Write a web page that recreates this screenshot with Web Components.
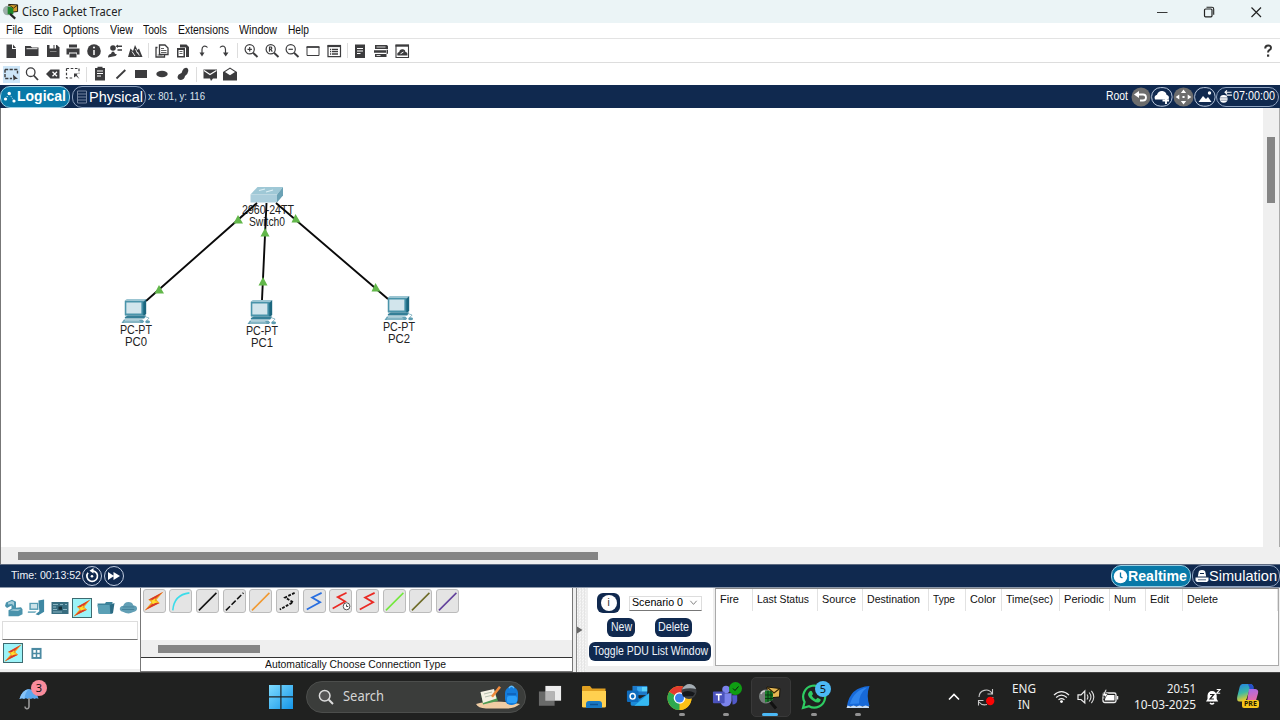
<!DOCTYPE html>
<html lang="en">
<head>
<meta charset="utf-8">
<title>Cisco Packet Tracer</title>
<style>
html,body{margin:0;padding:0;width:1280px;height:720px;overflow:hidden;background:#fff;font-family:"Liberation Sans",Arial,sans-serif}
</style>
</head>
<body>
<pt-desktop></pt-desktop>
<script>
const G='#3c3c3e';
const bolt='<path d="M15.500 0.500 3.500 7 6 9 0.500 15.500 12.500 9.500 10 7Z" fill="#f4a51c"/><path d="M15.500 0.500 3.500 7 8 7Z M0.500 15.500 12.500 9.500 7.500 9.500Z" fill="#d8382a"/><path d="M6 8 9 5.500 8.500 8 11 8.500 7 10.500Z" fill="#ffe030"/>';
const zig=(c,d='')=>`<path d="M14 1.500 6 5.200 12.700 9 1.500 14.800" fill="none" stroke="${c}" stroke-width="1.500" ${d}/>`;
const line=(c,d='')=>`<path d="M.8 15.500 15.500 1.500" fill="none" stroke="${c}" stroke-width="1.300" ${d}/>`;
/* Icons: [viewBox width, viewBox height, markup] */
const ICONS={
file:[16,16,`<path d="M3.500 1.500h5.500v4.500h4v9h-9.500z M10 1.500 13 5h-3z" fill="${G}"/>`],
folder:[16,16,`<path d="M1 3h5.500l1.500 1.500h6.500v8.500h-13.500z" fill="${G}"/><path d="M2.500 5.700h11" stroke="#fff" stroke-width=".9"/>`],
save:[16,16,`<path d="M2 2h10l2.500 2.500v9.500h-12.500z" fill="${G}"/><path d="M4.500 2h4v3.500h-4z M9.500 2h1.500v3.500h-1.500z" fill="#fff"/><path d="M5 8.500h6.500" stroke="#888"/>`],
print:[16,16,`<path d="M4 1.500h8v3h-8z M1.500 5.500h13v6h-2.500v-2h-8v2h-2.500z M4.500 10.500h7v4h-7z" fill="${G}"/>`],
info:[16,16,`<circle cx="8" cy="8" r="6.800" fill="${G}"/><path d="M8 7v5" stroke="#fff" stroke-width="1.500"/><circle cx="8" cy="4.600" r="1" fill="#fff"/>`],
user:[16,16,`<circle cx="6" cy="5" r="2.800" fill="${G}"/><path d="M1 14.500q0-3 3-3.800l1-2h2l1 2 2 .8-1.500 1.500z" fill="${G}"/><path d="M9.500 3.300h5.500M10.500 7h4.500" stroke="${G}" stroke-width="1.400"/><path d="M11 1.500 8.800 3.300 11 5z" fill="${G}"/>`],
wizard:[16,16,`<path d="M1 14 3.500 5.500 6 8 8 2 10.500 7 12 5.500 15.500 14z" fill="${G}"/><path d="M5 8.500 8 13M8.500 6l2 4.500M10.500 9l1.800 3.500" stroke="#fff" stroke-width=".9"/>`],
copy:[16,16,`<path d="M5.500 2h5.500l3 3v6.500h-8.500z M3.500 4.500h-1.500v9.500h8.500v-2" fill="none" stroke="${G}" stroke-width="1.300"/><path d="M7 5.500h3m-3 2h5.500m-5.500 2h5.500m-9 2.500h5" stroke="${G}" stroke-width=".8"/>`],
paste:[16,16,`<path d="M5 1.500h6.500l2.500 2.500v10h-3v-9.500h-6z M2 5h8v9.500h-8z" fill="${G}"/><path d="M3.500 7h5v6h-5z" fill="#fff"/><path d="M4.500 8.500h3m-3 2h3" stroke="${G}" stroke-width=".8"/>`],
undo:[16,16,`<path d="M11.500 4.500q-1.500-2-3.800-1.300Q6 4 6 6.500v4" fill="none" stroke="${G}" stroke-width="1.200"/><path d="M3.500 9.500h5l-2.500 4z" fill="${G}"/>`],
redo:[16,16,`<path d="M4 4.500q1.500-2 3.800-1.300Q9.500 4 9.500 6.500v4" fill="none" stroke="${G}" stroke-width="1.200"/><path d="M7 9.500h5.500l-2.800 4z" fill="${G}"/>`],
zin:[16,16,`<circle cx="6.700" cy="6.300" r="4.600" fill="none" stroke="${G}" stroke-width="1.200"/><path d="M10 9.700 14.500 14" stroke="${G}" stroke-width="1.900"/><path d="M4.500 6.300h4.400M6.700 4.100v4.400" stroke="${G}" stroke-width="1.200"/>`],
zr:[16,16,`<circle cx="6.700" cy="6.300" r="4.600" fill="none" stroke="${G}" stroke-width="1.200"/><path d="M10 9.700 14.500 14" stroke="${G}" stroke-width="1.900"/><path d="M5.500 8.800v-4.800h1.600q1.300 1.200 0 2.400h-1.600m1.300 0 1.500 2.300" fill="none" stroke="${G}" stroke-width="1.200"/>`],
zout:[16,16,`<circle cx="6.700" cy="6.300" r="4.600" fill="none" stroke="${G}" stroke-width="1.200"/><path d="M10 9.700 14.500 14" stroke="${G}" stroke-width="1.900"/><path d="M4.500 6.300h4.400" stroke="${G}" stroke-width="1.200"/>`],
rect:[16,16,`<path d="M2 4h12v8.500h-12z" fill="none" stroke="${G}" stroke-width="1"/><path d="M1.500 4h13" stroke="${G}" stroke-width="1.600"/>`],
list:[16,16,`<path d="M2 2.800h12.500v10.800h-12.500z" fill="none" stroke="${G}" stroke-width="1.200"/><path d="M1.500 3h13.500" stroke="${G}" stroke-width="2.200"/><path d="M4 6.500h1.200m.8 0h6M4 8.700h1.200m.8 0h6M4 11h1.200m.8 0h6" stroke="${G}" stroke-width="1.300"/>`],
doc:[16,16,`<path d="M3 1.500h10v13.500h-10z" fill="${G}"/><path d="M5 5.500h6M5 8h6M5 10.500h3.500" stroke="#fff" stroke-width="1.100"/>`],
cards:[16,16,`<path d="M2 2h12l1 1.200v2.800h-13z M1 7.200h12v2.500h-12z M2 11h11.500v3h-11.500z M13.500 6.800h1.500v4h-1.500z" fill="${G}"/><path d="M3.500 4h9M3.500 12.500h4" stroke="#fff" stroke-width=".8"/>`],
cloudwin:[16,16,`<path d="M2 2h12.500v12.500h-12.500z" fill="none" stroke="${G}" stroke-width="1.100"/><path d="M1.500 2.700h13.500" stroke="${G}" stroke-width="2"/><path d="M3.500 12.500q-1-3 1.700-3.500 .5-3 3.500-2.700 2.500 0 2.700 2.700 2.500.3 2 3.500z" fill="${G}"/><path d="M6.500 10.800 9.500 9" stroke="#fff"/>`],
help:[16,16,`<path d="M5.200 5.500q0-3 3-3t2.700 2.500q0 1.400-1.600 2.200-1.300.8-1.200 2.300" fill="none" stroke="#333" stroke-width="2"/><path d="M7 11.500h2.200v2.200h-2.200z" fill="#333"/>`],
select:[18,16,`<path d="M3 3.500h12.500v4M3 3.500v9h7" fill="none" stroke="${G}" stroke-width="1.400" stroke-dasharray="3.200 1.400"/><path d="M11 8.500l5 4.500h-2.500l-2 1.500z" fill="${G}"/>`],
mag:[16,16,`<circle cx="6.700" cy="6.200" r="4.300" fill="none" stroke="${G}" stroke-width="1.300"/><path d="M9.800 9.500 14 14" stroke="${G}" stroke-width="1.800"/>`],
del:[16,16,`<path d="M1 8 5.500 3.500h9v9h-9z" fill="${G}"/><path d="M7.500 5.800 12 10.300m0-4.500-4.500 4.500" stroke="#fff" stroke-width="1.300"/>`],
resize:[16,16,`<path d="M1.500 2.500h12.500v5M1.500 2.500v9.500h6.500" fill="none" stroke="${G}" stroke-width="1.200" stroke-dasharray="2.600 1.600"/><path d="M9 7.500h4l-1.300 1.300 2.800 4.200-3.500-3-2 1.500z" fill="${G}"/>`],
note:[16,16,`<path d="M3 2h10v12.500h-10z M5.500 .8h5v2h-5z" fill="${G}"/><path d="M5 5h6M5 7.500h6M5 10h4" stroke="#fff" stroke-width="1"/>`],
pen:[16,16,`<path d="M3.500 12.500 12.300 4" stroke="${G}" stroke-width="1.800"/>`],
frect:[16,16,`<path d="M2 4h12v8h-12z" fill="${G}"/>`],
fell:[16,16,`<ellipse cx="8" cy="8" rx="5.700" ry="3.300" fill="${G}"/>`],
blob:[16,16,`<path d="M7.500 4.500Q8.500 2 11 1.800 13.500 2 13.300 5 12.800 8.500 10 10 9.500 13.500 6 14 2.800 14 2.500 11 2.800 8 5.500 7.500 7 7 7.500 4.500Z" fill="${G}"/>`],
mail:[16,16,`<path d="M1.500 3.500h13.500v9h-4l-2 2.500-1-2.500h-6.500z" fill="${G}"/><path d="M2 4.500 8 8.500 14.500 4.500" fill="none" stroke="#fff" stroke-width="1.100"/>`],
mailo:[16,16,`<path d="M1 6 8 1.500 15 6v8.500h-14z" fill="${G}"/><path d="M8 2.700 13 6 8 9.200 3 6z" fill="#fff"/>`],
logical:[14,14,`<g fill="#fff"><circle cx="2.500" cy="9" r="1.600"/><circle cx="6.200" cy="3.500" r="1.700"/><circle cx="11" cy="11" r="1.600"/></g><path d="M2.500 9 6.200 3.500 11 11" fill="none" stroke="#fff" stroke-width=".9" stroke-dasharray="1 1.500"/>`],
rack:[12,14,`<path d="M1.500 1h9v12h-9zM1.500 4h9M1.500 7h9M1.500 10h9" fill="none" stroke="#7686a2" stroke-width="1"/>`],
back:[20,20,`<circle cx="10" cy="10" r="9.500" fill="#6d6d6d"/><path d="M6 7.500h6q3 0 3 3t-3 3h-3" fill="none" stroke="#fff" stroke-width="1.800"/><path d="M8 4v7l-5-3.500z" fill="#fff"/>`],
cloudp:[22,20,`<rect x=".6" y=".6" width="20.500" height="18.600" rx="9" fill="#10294f" stroke="#b9c8dd"/><path d="M4 12.500q-1.500-3.800 2-4.800 1.500-4.200 5.500-3.700 3.500.5 4 3.700 3.500 1 2 4.800z" fill="#fff"/><path d="M15 10v7m-3.500-3.500h6.500" stroke="#fff" stroke-width="1.900"/>`],
move:[20,20,`<circle cx="10" cy="10" r="9.500" fill="#6d6d6d"/><path d="M10 2.500 12.500 6h-5zM10 17.500 7.500 14h5zM2.500 10 6 7.500v5zM17.500 10 14 12.500v-5zM9 9h2v2h-2z" fill="#fff"/>`],
pic:[22,20,`<rect x=".6" y=".6" width="20.500" height="18.600" rx="9" fill="#10294f" stroke="#b9c8dd"/><path d="M4.500 15 9 9l3 3 2-2 3.500 5z" fill="#fff"/><circle cx="15.500" cy="6" r="1.700" fill="#fff"/>`],
env:[15,16,`<circle cx="5" cy="10.500" r="4.200" fill="#fff"/><path d="M1 9.500h8M1.500 12h7" stroke="#5d6d88" stroke-width=".8"/><path d="M6.500 3.500h7m-5-2-2 2 2 2M8 6.500h6" fill="none" stroke="#fff" stroke-width="1.300"/>`],
reset:[22,20,`<circle cx="11" cy="10" r="9.500" fill="none" stroke="#c0cce0"/><path d="M12 4.800a5.300 5.300 0 1 1-5 2" fill="none" stroke="#fff" stroke-width="1.700"/><path d="M8.500 4.700 12.500 2v5.500z" fill="#fff"/><circle cx="11" cy="10.300" r="1.300" fill="#fff"/>`],
fwd:[22,20,`<circle cx="11" cy="10" r="9.500" fill="none" stroke="#c0cce0"/><path d="M5 6 11 10 5 14zM10.500 6l6.500 4-6.500 4z" fill="#fff"/>`],
clock:[15,15,`<circle cx="7.500" cy="7.500" r="6.800" fill="#fff"/><path d="M7.500 3.500v4.300l2 1.200" fill="none" stroke="#0577a7" stroke-width="1.300"/>`],
sim:[14,14,`<path d="M3.500 4q0-3 3.500-3t3.500 3l.7 3.500H2.800zM.5 8.500h13v3l-1.500 1.500H2L.5 11.500z" fill="#fff"/><path d="M5 4.500h4" stroke="#10294f"/><path d="M3 10.800h8" stroke="#10294f" stroke-width=".7"/>`],
router:[20,18,`<path d="M2 3.500 8 .8l4 2v6l5-.5 1.500 2v5l-4 2h-10v-6l3-1.500v-3.300L3 9 1 7z" fill="#4a93ac"/><path d="M4 3.500l4-1.500 2 1v4l-2-2-4 .5zM6 11.500l3-1.300h8l-3 1.800z" fill="#a5cdd9"/>`],
enddev:[20,18,`<path d="M12 1.500 18 .5v13l-6 3.500-3-1 4-3z" fill="#3f88a3"/><path d="M2.500 4h9.500v7.500h-9.500z" fill="#579db4"/><path d="M4 5.300h6.500v4.700h-6.500z" fill="#cde3ea"/><path d="M1 13h9l-1.500 1.800H.8z" fill="#7db3c4"/>`],
board:[18,14,`<path d="M.5 1h17v12h-17z" fill="#386d80"/><path d="M2 3.500h5M9 3.500h3M14 3.500h2M2 6h3M2 8.500h4M12 8.500h4M2 11h9" stroke="#95bdca" stroke-width=".9"/><path d="M7.500 5.500h3.500v3.300h-3.500z" fill="#152f39"/>`],
fold:[18,16,`<path d="M.5 3.500h7.500l1-1.500h6.500v11.500h-14z" fill="#3c829a"/><path d="M.5 5h12l1 9h-11.500z" fill="#5ba0b6"/><path d="M13 5 17.500 3 16 13l-2.500 1z" fill="#2b6b83"/>`],
cloud:[20,16,`<path d="M4 12.500q-4-1-3-4.300Q2 6 4.500 6 5.500 2 10 2q4 0 5 3.500 4 .5 4 3.500 0 3-4 3.700-5 3-11-.2z" fill="#629fb5"/><path d="M4 7.300h12M3 10h13" stroke="#3c7b94" stroke-width=".8"/>`],
bolt:[16,16,bolt],
grid4:[12,14,`<path d="M.5 1h11v12h-11z" fill="#4b8aa2"/><path d="M2.500 3.300h2.700v2.900h-2.700zM6.800 3.300h2.700v2.900h-2.700zM2.500 8h2.700v2.900h-2.700zM6.800 8h2.700v2.900h-2.700z" fill="#fff"/>`],
console:[16,16,`<path d="M1.500 15.500Q2.500 3 15.500 1.500" fill="none" stroke="#3cdcea" stroke-width="1.300"/>`],
straight:[16,16,line('#111')],
cross:[16,16,line('#111','stroke-dasharray="4.800 1.700"')],
fiber:[16,16,line('#f0982f')],
phone:[16,16,zig('#111','stroke-dasharray="2.400 1.100"')],
coax:[16,16,zig('#2a6fe0')],
dce:[18,17,zig('#ea2a24')+'<circle cx="14" cy="13" r="3" fill="#fff" stroke="#444" stroke-width=".8"/><path d="M14 11.500v1.700h1.500" fill="none" stroke="#333" stroke-width=".8"/>'],
dte:[16,16,zig('#ea2a24')],
octal:[16,16,line('#72e83c')],
iot:[16,16,line('#6d6a26')],
usb:[16,16,line('#62419c')],
umbrella:[30,30,`<path d="M2.500 17Q5 8 12 7q8 1 9.500 10-2-1.500-4 0-1.500-1.700-3.500 0-1.800-1-3.300 0-1.700-1.700-4 0-2-1.500-4.200 0z" fill="#5aa7ee"/><path d="M12 7q-4 3-4.500 10-2-1.500-5 0Q5 8 12 7z" fill="#86c3f8"/><path d="M12 16v8.500q-.3 2.800-2.800 2-1.200-.5-1.200-2" fill="none" stroke="#999" stroke-width="1.600"/>`],
windows:[24,24,`<defs><linearGradient id="g" x1="0" y1="0" x2="1" y2="1"><stop offset="0" stop-color="#7fdcff"/><stop offset="1" stop-color="#1495e8"/></linearGradient></defs><path d="M0 0h11.300v11.300H0zM12.500 0H24v11.300H12.500zM0 12.500h11.300V24H0zM12.500 12.500H24V24H12.500z" fill="url(#g)"/>`],
smag:[16,16,`<circle cx="6.700" cy="6.700" r="5.300" fill="#555" stroke="#ddd" stroke-width="1.500"/><path d="M10.800 10.800 15 15" stroke="#ddd" stroke-width="2"/>`],
backpack:[46,26,`<path d="M1 20q14 -5 44 0-5 4-12 4.500H11Q3 24 1 20z" fill="#f0cda4"/><path d="M6 9 19 6l4 11-15 3.500z" fill="#4f9c54"/><path d="M5.500 8 19 5l2.500 9.500L8 19z" fill="#f5f1e4"/><path d="M9 10l8-2M10 13l8-2" stroke="#b5bfae"/><path d="M16 12 24 2l2 1.500-8 10z" fill="#f08a3c"/><rect x="30" y="3" width="13" height="18" rx="6" fill="#147cda"/><path d="M34 4q2.500-3.500 5 0" fill="none" stroke="#5bbcff" stroke-width="1.500"/><rect x="32" y="12" width="10" height="7" rx="2" fill="#2ba0fb"/><path d="M32 10h9" stroke="#0c4fa0"/>`],
taskview:[26,24,`<path d="M8 1h17v16H8z" fill="#ededed"/><path d="M1 7h17v15.500H1z" fill="#777" opacity=".85"/><path d="M8 7h10v10H8z" fill="#b5b5b5"/>`],
explorer:[26,24,`<path d="M1 2q0-1 1-1h7l2 2.500h13.500V22H1z" fill="#e0a021"/><path d="M1 6h24v15q0 1.500-1.500 1.500h-21Q1 22.500 1 21z" fill="#ffd04f"/><path d="M5 23v-4q0-3 3-3h10q3 0 3 3v4z" fill="#1879c4"/><path d="M9 19.500h8" stroke="#0c5394" stroke-width="1.500"/>`],
outlook:[26,24,`<path d="M7 1h16v10H7z" fill="#1d79c9"/><path d="M12 2h5v5h-5z" fill="#37aaf0"/><path d="M17 2h6v5h-6z" fill="#5ad1fb"/><path d="M5 9l10 6 10-6v12q0 1.500-1.500 1.500H6.500Q5 22.500 5 21z" fill="#1a8ad9"/><path d="M25 9v12q0 1.500-1.500 1.500H9z" fill="#35b8f1"/><rect x="1" y="6" width="12.500" height="12.500" rx="1.200" fill="#0f6cbd"/><ellipse cx="7.200" cy="12.200" rx="2.800" ry="3.100" fill="none" stroke="#fff" stroke-width="1.600"/>`],
chrome:[30,28,`<circle cx="12.500" cy="15" r="12" fill="#fbc116"/><path d="M12.500 15 2.100 9A12 12 0 0 1 22.900 9z" fill="#e33b2e"/><path d="M2.100 9 12.500 15 12.500 27A12 12 0 0 1 2.100 9z" fill="#2da94f"/><path d="M12.500 27 18 17 22.900 9A12 12 0 0 1 12.500 27z" fill="#fbc116"/><circle cx="12.500" cy="15" r="5.800" fill="#fff"/><circle cx="12.500" cy="15" r="4.500" fill="#3a7eea"/><circle cx="22" cy="8.500" r="7.500" fill="#3b3e41"/><path d="M14.800 6.500Q18 1 22.500 1q5 .5 6.700 5-7-1.500-14.400.5z" fill="#a4adb3"/><path d="M15 10q5-4 13 0l-2 3-10 .5z" fill="#15171a"/>`],
teams:[30,26,`<circle cx="15" cy="6" r="4" fill="#7b83eb"/><circle cx="23" cy="8" r="3" fill="#5059c9"/><path d="M9 10h12v8q-1 6-6 6t-6-5z" fill="#7b83eb"/><path d="M21.500 12H27v6q-1 4-5 4z" fill="#5059c9"/><rect x="1" y="8" width="12.500" height="12.500" rx="1" fill="#4b53bc"/><path d="M4 11.300h6.500M7.200 11v7" stroke="#fff" stroke-width="1.700"/>`],
pt:[24,26,`<path d="M9 3 22 4.500 21.500 13 9.500 14z" fill="#e5b752" stroke="#17130b"/><path d="M9.500 3.500 16 9l5.500-4.200" fill="none" stroke="#3b2a08" stroke-width="1.300"/><circle cx="8" cy="12.500" r="7" fill="#777d7c"/><path d="M7 7q5-1.500 8 2v7l-8 2.500z" fill="#187f2a"/><path d="M7 11h8M7 14.500h8M10 7v11M13 7v10" stroke="#07370f"/><path d="M12.500 18 18 24.500" stroke="#111" stroke-width="3"/><path d="M3 10q1-3 4-3" fill="none" stroke="#ccc" stroke-width="1.500"/>`],
ptsmall:[18,18,`<path d="M7 1.500 16.500 2v7L8 10z" fill="#cf9a29" stroke="#17130b"/><path d="M7.500 2 12 5.500 16 2.500" fill="none" stroke="#392a0b"/><circle cx="6" cy="8" r="5" fill="#9dafaa"/><path d="M6 4q4-.5 6 2v6H6z" fill="#1e872b"/><path d="M8.500 11.500 14 16.500" stroke="#222" stroke-width="2.300"/>`],
whatsapp:[26,26,`<path d="M2 24 3.600 18A11 11 0 1 1 8 22.300z" fill="#202020" stroke="#2ecc62" stroke-width="2.200"/><path d="M8.500 7.500q1.500-1.500 2.500 0l1 2.500-1.200 1.800q1.500 2.600 4 3.700l1.700-1.700 3 1.400q.8 1-1 2.800-2.500 1.500-6-1-5.500-3.500-5.500-7 .5-1.500 1.500-2.500z" fill="#2ecc62"/>`],
shark:[24,24,`<path d="M1 21Q4 2 23.500 1q-3.500 9 0 20z" fill="#1769d8"/><path d="M4 19Q8 5 21 2.500q-8 6-8 16z" fill="#2f85ee"/><path d="M.5 23l1-2.500 3 1 3-1 3 1 3-1 3 1 3-1 3.500 1v1.500z" fill="#c9dff8"/>`],
up:[14,10,`<path d="M2 7.500 7 2.500l5 5" fill="none" stroke="#fff" stroke-width="1.600"/>`],
sync:[20,20,`<path d="M3 10A7 7 0 0 1 16 6.500M16.500 2v5h-5M3 15q3 4 8 2.500M2.500 18.500v-5h5" fill="none" stroke="#c9c9c9" stroke-width="1.100"/><path d="M17 10q0 4-4 6.200" fill="none" stroke="#c9c9c9"/><circle cx="14.200" cy="14" r="4.200" fill="#fa0505"/>`],
wifi:[18,16,`<path d="M1 6.500Q9-1 17 6.500M3.300 9Q9 4 14.700 9M5.800 11.500Q9 9 12.200 11.500" fill="none" stroke="#eee" stroke-width="1.300"/><circle cx="9" cy="13.300" r="1.500" fill="#fff"/>`],
vol:[18,16,`<path d="M1 5.800h3L7.800 2v12L4 10.500H1z" fill="none" stroke="#eee" stroke-width="1.200"/><path d="M10 5.500q1.800 2.500 0 5M12.200 3.500q3.500 4.500 0 9M14.400 1.800q4.800 6 0 12.400" fill="none" stroke="#ddd" stroke-width="1.100"/>`],
batt:[18,16,`<rect x="2" y="4" width="13" height="9.500" rx="1.800" fill="none" stroke="#eee" stroke-width="1.300"/><path d="M5 6h8.500v5.500H3.800z" fill="#fff"/><path d="M16.500 7v3.500" stroke="#eee" stroke-width="1.500"/><path d="M4.500.5 1 7h3L2.500 11 7 4.500H4.300L6 .5z" fill="#fff" stroke="#202020" stroke-width=".6"/>`],
bell:[18,18,`<path d="M2 13.500 3.500 11V7.500Q4 3 8 3q4 0 4.700 4.500V11l1.500 2.500z" fill="#fff"/><path d="M6 15q2 2 4 0" stroke="#fff" stroke-width="1.600" fill="none"/><path d="M6 6.500h3.700L6 11h3.900" fill="none" stroke="#202020" stroke-width="1.200"/><path d="M12.700 1.500h3.300l-3.300 3.800h3.500" fill="none" stroke="#fff" stroke-width="1.100"/>`],
copilot:[26,24,`<defs><linearGradient id="a" x1="0" y1="0" x2=".3" y2="1"><stop offset="0" stop-color="#2380e8"/><stop offset=".55" stop-color="#3ab8a5"/><stop offset="1" stop-color="#f0cd27"/></linearGradient><linearGradient id="b" x1="0" y1="0" x2=".2" y2="1"><stop offset="0" stop-color="#a06bed"/><stop offset="1" stop-color="#f26a9c"/></linearGradient></defs><path d="M7 1h8.500q3 0 3.500 4L15 6l-3.500 11q-1 3-4 3H4Q0 20 1.500 14L4 4q.8-3 3-3z" fill="url(#a)"/><path d="M14 6.500h7q4 .5 2.800 5l-2 7q-1 4-5 4h-7q2-1 2.500-4z" fill="url(#b)"/><path d="M13 1h3q3 .5 3.300 5.500H15z" fill="#264fca"/>`],
min:[16,16,`<path d="M3 8.500h10.500" stroke="#222" stroke-width=".9"/>`],
max:[16,16,`<rect x="3.500" y="5" width="7.500" height="7.800" rx="1" fill="none" stroke="#222" stroke-width="1.200"/><path d="M5.500 3.300h5.500q1.700 0 1.700 1.700v5.800" fill="none" stroke="#222" stroke-width="1.100"/>`],
close:[16,16,`<path d="M3.500 3.500 13 13M13 3.500 3.500 13" stroke="#222" stroke-width="1.200"/>`],
caret:[10,8,`<path d="M1.500 2 5 6l3.500-4" fill="none" stroke="#777" stroke-width="1"/>`],
pc:[32,26,`<path d="M4 2.500h20v15H4z" fill="#297890"/><path d="M4 2.500 6 1h20l-2 2.500z" fill="#9bc5d2"/><path d="M23.500 3.500 26 1v15l-2.500 2z" fill="#1b667e"/><path d="M4 3h18.500v14H4z" fill="#4a94aa"/><path d="M5.500 4.500h15.500v11H5.500z" fill="#d2e5ec"/><path d="M4 19 7 17.500h19l-2 3H4z" fill="#357f97"/><path d="M3 21.500h19l2 2L22.500 25H.5z" fill="#65a2b5"/><path d="M4 22.500h15M3 24h17" stroke="#c3dce3" stroke-width=".7"/><path d="M24.500 18.500 29 20l-3 3" fill="none" stroke="#76abbc" stroke-width=".8"/><ellipse cx="27.500" cy="23.800" rx="2.500" ry="1.500" fill="#5b9cb0"/>`],
switch:[36,20,`<path d="M1.500 9.500 8.500 2H34l-6 7.500z" fill="#9fc8d6"/><path d="M28 9.500 34 2v8.500L28 17.500z" fill="#6ba2b5"/><path d="M1.500 9.500H28v8H1.500z" fill="#aacddb"/><path d="M10 5.500 16 4m1 3 7-2" stroke="#ddf0f5" stroke-width="1.200"/>`]
};
function define(name,css,html,setup){
  customElements.define(name,class extends HTMLElement{
    connectedCallback(){
      if(this.shadowRoot)return;
      const r=this.attachShadow({mode:'open'});
      const t=document.createElement('template');
      t.innerHTML='<style>*{box-sizing:border-box}'+css+'</style>'+(typeof html==='function'?html(this):html);
      r.append(t.content.cloneNode(true));
      if(setup)setup(this,r);
    }
  });
}
/* Single-line label condensed or widened to fill its w attribute */
define('fit-text',':host{display:inline-block;white-space:nowrap;flex:none;line-height:1.15}span{display:inline-block;transform-origin:0 50%}','<span><slot></slot></span>',(el,r)=>{
  const w=+el.getAttribute('w'),s=r.querySelector('span');
  el.style.width=w+'px';
  s.style.transform=`scaleX(${(w/s.getBoundingClientRect().width).toFixed(4)})`;
});
define('pt-icon',':host{display:inline-flex;flex:none}svg{display:block}',el=>{
  const [w,h,m]=ICONS[el.getAttribute('name')];
  const W=+(el.getAttribute('w')||w),H=+(el.getAttribute('h')||h*W/w);
  return `<svg width="${W}" height="${H}" viewBox="0 0 ${w} ${h}" preserveAspectRatio="none">${m}</svg>`;
});
const tools=s=>s.split(' ').map(n=>n==='|'?'<i></i>':`<b class="${n}"><pt-icon name="${n}" w="${n==='select'?18:16}"></pt-icon></b>`).join('');
define('title-bar',':host{display:flex;align-items:center;height:23px;background:#ebf4f6;color:#222;font:12px "Noto Sans","Open Sans",sans-serif;padding:0 16px 0 2px}fit-text{margin:1px 0 0 3px}.w{margin-left:auto;display:flex;gap:31px}',
 '<pt-icon name="ptsmall" w="17"></pt-icon><fit-text w="100">Cisco Packet Tracer</fit-text><div class="w"><pt-icon name="min"></pt-icon><pt-icon name="max"></pt-icon><pt-icon name="close"></pt-icon></div>');
define('menu-bar',':host{display:flex;align-items:center;height:16px;padding-left:6px;font-size:12px;color:#111;border-bottom:1px solid #e3e3e3}span{flex:none;display:flex;padding-top:1px}',
 [['File',17,28],['Edit',18,29],['Options',36,47],['View',23,33],['Tools',24,35],['Extensions',51,61],['Window',38,49],['Help',21,30]].map(([t,w,c])=>`<span style="width:${c}px"><fit-text w="${w}">${t}</fit-text></span>`).join(''));
define('tool-bar',':host{display:flex;align-items:center;height:23px;padding:0 2px 0 1px}b{width:20.700px;height:17px;display:flex;align-items:center;justify-content:center;flex:none}b.select{background:linear-gradient(#cde6f8,#cde6f8) center/17px 17px no-repeat}i{width:6px;height:15px;flex:none;background:linear-gradient(#ddd,#ddd) center/1px 100% no-repeat}.help{margin-left:auto}',
 el=>tools(el.getAttribute('items'))+(el.hasAttribute('help')?'<b class="help"><pt-icon name="help"></pt-icon></b>':''));
define('mode-tab',':host{display:flex;align-items:center;height:22px;border:1px solid #8fa3c0;border-radius:10px;color:#fff;font-size:15px;background:#10294f;flex:none}:host([on]){background:#0879a8;border-color:#9bd0e4;font-weight:bold;font-size:14.500px}','<slot></slot>');
define('view-bar',':host{display:flex;align-items:center;height:23px;background:#10294f;color:#fff;font-size:12px}mode-tab.l{width:70px;padding-left:2px}mode-tab.p{width:74px;margin:0 2px;padding-left:3px}mode-tab.p fit-text{margin-left:1px}.xy{font-size:10.500px;color:#dde4ee}.r{display:flex;align-items:center;margin-left:auto;margin-right:1px}.c{width:63px;padding-left:2px;font-size:12px;height:20px}',
 '<mode-tab class="l" on><pt-icon name="logical" w="14"></pt-icon><fit-text w="49">Logical</fit-text></mode-tab><mode-tab class="p"><pt-icon name="rack" w="12"></pt-icon><fit-text w="54">Physical</fit-text></mode-tab><fit-text class="xy" w="57">x: 801, y: 116</fit-text><div class="r"><fit-text w="22" style="margin-right:3px">Root</fit-text><pt-icon name="back"></pt-icon><pt-icon name="cloudp"></pt-icon><pt-icon name="move" w="21" h="20"></pt-icon><pt-icon name="pic"></pt-icon><mode-tab class="c"><pt-icon name="env" w="14"></pt-icon><fit-text w="42">07:00:00</fit-text></mode-tab></div>');
define('net-node',':host{position:absolute;display:flex;flex-direction:column;align-items:center;width:60px;font-size:12px;line-height:12px;color:#222}slot{display:contents}','<slot></slot>');
define('net-canvas',':host{display:grid;grid-template-columns:1262px 17px;grid-template-rows:439px 17px;height:456px;border-left:1px solid #777;background:#fff}.stage{position:relative;overflow:hidden}.links{position:absolute;inset:0}.v{background:#efefef;padding:29px 0 0 4px;border-right:1px solid #aaa}.v i{display:block;width:8px;height:66px;background:#858585}.h{background:#efefef;padding:5px 0 0 17px;grid-column:1/3}.h i{display:block;width:580px;height:8px;background:#858585}fit-text{line-height:12px}',
 `<div class="stage">
 <net-node style="left:236px;top:77px"><pt-icon name="switch" w="36" h="20"></pt-icon><fit-text w="52" style="margin:-1px 0 0 1px">2960-24TT</fit-text><fit-text w="36">Switch0</fit-text></net-node>
 <svg class="links" width="1262" height="439"><path d="M256 95 145 193M265.500 95 261 192M275 95 387 191" stroke="#0a0a0a" stroke-width="1.900"/><path d="M237 107l5 8.500h-9.500zM158 177l5 8.500h-9.500zM264 120l4.500 8.500h-9zM262 169l4.500 8.500h-9zM294.500 106l5 8.500h-9zM374.500 175l5 8.500h-9z" fill="#62b74a"/></svg>
 <net-node style="left:105px;top:190px"><pt-icon name="pc" w="31" h="26"></pt-icon><fit-text w="32">PC-PT</fit-text><fit-text w="22">PC0</fit-text></net-node>
 <net-node style="left:231px;top:191px"><pt-icon name="pc" w="31" h="26"></pt-icon><fit-text w="32">PC-PT</fit-text><fit-text w="22">PC1</fit-text></net-node>
 <net-node style="left:368px;top:187px"><pt-icon name="pc" w="31" h="26"></pt-icon><fit-text w="32">PC-PT</fit-text><fit-text w="22">PC2</fit-text></net-node></div><div class="v"><i></i></div><div class="h"><i></i></div>`);
define('time-bar',':host{display:flex;align-items:center;height:24px;background:#10294f;color:#eef2f7;font-size:11.500px;padding-left:11px;border-top:1px solid #5d6a80;border-bottom:1px solid #8d98aa}.r{margin-left:auto;display:flex;gap:1px}.a{width:80px;padding-left:1px}.b{width:88px;padding-left:2px}',
 '<fit-text w="70">Time: 00:13:52</fit-text><pt-icon name="reset"></pt-icon><pt-icon name="fwd"></pt-icon><div class="r"><mode-tab class="a" on><pt-icon name="clock" w="15"></pt-icon><fit-text w="59">Realtime</fit-text></mode-tab><mode-tab class="b"><pt-icon name="sim" w="14"></pt-icon><fit-text w="68">Simulation</fit-text></mode-tab></div>');
define('device-picker',':host{display:flex;flex-direction:column;width:140px;height:84px;padding:10px 0 0 2px;background:#fff;border-bottom:3px solid #eee}.r{display:flex;align-items:center;height:20px}.r b{width:23px;height:20px;display:flex;align-items:center;justify-content:center;flex:none}.on{background:#9cf3f8;border:1px solid #3d6a70;width:20px!important}.q{height:19px;width:136px;margin:3px 0;border:1px solid #ddd;border-bottom-color:#777}',
 '<div class="r"><b><pt-icon name="router" w="20"></pt-icon></b><b><pt-icon name="enddev" w="19"></pt-icon></b><b><pt-icon name="board" w="18"></pt-icon></b><b class="on" style="margin:0 1px"><pt-icon name="bolt" w="18"></pt-icon></b><b style="margin-left:1px"><pt-icon name="fold" w="18"></pt-icon></b><b><pt-icon name="cloud" w="19"></pt-icon></b></div><div class="q"></div><div class="r"><b class="on" style="margin-left:1px"><pt-icon name="bolt" w="18"></pt-icon></b><b style="margin-left:2px"><pt-icon name="grid4" w="11"></pt-icon></b></div>');
define('cable-list',':host{display:flex;flex-direction:column;width:433px;height:84px;background:#fff;border:1px solid #777;border-top:0}.r{display:flex;gap:3.700px;padding:1px 0 0 1.500px;height:53px}.r b{width:23px;height:24px;border:1px solid #bbb;border-radius:3px;background:#e4e4e4;display:flex;align-items:center;justify-content:center;flex:none}.s{height:17px;background:#efefef;padding:5px 0 0 17px}.s i{display:block;width:102px;height:8px;background:#858585}.t{flex:1;border-top:1px solid #333;display:flex;justify-content:center;align-items:center;font-size:11.500px;color:#111;padding-right:2px}',
 '<div class="r">'+'bolt console straight cross fiber phone coax dce dte octal iot usb'.split(' ').map(n=>`<b><pt-icon name="${n}" w="${n==='bolt'||n==='dce'?20:19}" h="20"></pt-icon></b>`).join('')+'</div><div class="s"><i></i></div><div class="t"><fit-text w="181">Automatically Choose Connection Type</fit-text></div>');
define('pill-button',':host{display:flex;align-items:center;justify-content:center;background:#10294f;color:#eef3fa;border-radius:6px;height:19px;font-size:12px;flex:none}','<slot></slot>');
define('scenario-panel',':host{display:flex;width:142px;height:84px;background:#eee;flex:none}.g{width:10px;margin-left:3px;border-left:1px solid #888;display:flex;align-items:center;background:repeating-conic-gradient(#e5e5e5 0 25%,#f7f7f7 0 50%) 0/3px 3px}.g svg{display:block}.p{width:125px;height:78px;background:#fff;margin-left:2px;display:flex;flex-direction:column}.p>div{display:flex;align-items:center}.i{width:23px;height:20px;border-radius:6px;background:#10294f;display:flex;align-items:center;justify-content:center}.i span{width:16px;height:16px;border-radius:50%;background:#fff;color:#222;font-size:10px;line-height:16px;text-align:center}.s{display:flex;align-items:center;width:73px;height:15px;border:1px solid #ddd;border-bottom-color:#777;margin-left:9px;padding-left:2px;font-size:11.500px;gap:6px}',
 '<div class="g"><svg width="6" height="10"><path d="M0 1.500 5.500 5 0 8.500z" fill="#666"/></svg></div><div class="p"><div style="height:20px;margin:5px 0 0 9px"><span class="i"><span>i</span></span><span class="s"><fit-text w="51">Scenario 0</fit-text><pt-icon name="caret" w="9"></pt-icon></span></div><div style="margin:5px 0 0 19px;gap:20px"><pill-button style="width:28px"><fit-text w="21">New</fit-text></pill-button><pill-button style="width:37px"><fit-text w="31">Delete</fit-text></pill-button></div><div style="margin:5px 0 0 1px"><pill-button style="width:122px"><fit-text w="115">Toggle PDU List Window</fit-text></pill-button></div></div>');
define('pdu-table',':host{display:block;flex:1;height:84px;background:#eee;padding-right:1px}.t{height:78px;background:#fff;border:1px solid #aaa;border-top-color:#888}.h{display:flex;font-size:11.500px;color:#111;height:22px}.h span{display:flex;align-items:center;padding-left:4px;border-right:1px solid #e2e2e2;flex:none}',
 '<div class="t"><div class="h">'+[['Fire',37,19],['Last Status',65,52],['Source',45,34],['Destination',66,53],['Type',37,22],['Color',36,26],['Time(sec)',58,47],['Periodic',50,40],['Num',36,22],['Edit',37,19],['Delete',95,31]].map(([t,w,n])=>`<span style="width:${w}px"><fit-text w="${n}">${t}</fit-text></span>`).join('')+'</div></div>');
define('task-app',':host{position:relative;display:flex;flex-direction:column;align-items:center;justify-content:center;width:44px;height:48px;flex:none}:host([active]) .bg{position:absolute;inset:4px 1px 4px 3px;border:1px solid #393939;background:#2d2d2d;border-radius:5px}.ic{position:relative;z-index:1}.bar{position:absolute;bottom:5px;width:6px;height:3px;border-radius:2px;background:#929292}:host([active]) .bar{width:16px;background:#4bb8f5}.badge{position:absolute;z-index:2;right:5px;top:8px;width:16px;height:16px;border-radius:50%;background:#4cb9f5;color:#111;font:11px/16px "Noto Sans",sans-serif;text-align:center}.ok{background:#0f9d13;width:13px;height:13px;top:9px;right:6px;display:flex;align-items:center;justify-content:center}',
 el=>`<div class="bg"></div><pt-icon class="ic" name="${el.getAttribute('icon')}" w="${el.getAttribute('w')||24}"></pt-icon>${el.hasAttribute('run')?'<i class="bar"></i>':''}${el.hasAttribute('badge')?`<span class="badge" style="${el.getAttribute('bs')||''}">${el.getAttribute('badge')}</span>`:''}${el.hasAttribute('ok')?'<span class="badge ok"><svg width="9" height="9"><path d="M2 4.500 4 6.500 7.500 2.500" fill="none" stroke="#111"/></svg></span>':''}`);
define('task-bar',':host{display:flex;align-items:center;height:48px;background:#202120;border-top:1px solid #444;color:#f1f1f1;font:12px "Noto Sans","Open Sans",sans-serif}.q{display:flex;align-items:center;width:220px;height:32px;border-radius:16px;background:#3b3d3b;border:1px solid #4c4e4c;padding:0 4px 0 11px;margin:0 2px 0 3px;font-size:13.500px;color:#d5d5d5;flex:none}.q fit-text{margin-left:9px}.q .b{margin-left:auto}.l{display:flex;flex-direction:column;line-height:16px}.l fit-text{line-height:16px}.cp{position:relative}.cp span{position:absolute;left:6px;top:17px;background:#f7c61b;color:#221a00;font:bold 7px/8px "Noto Sans",sans-serif;border-radius:2px;padding:0 2px}',
 `<task-app icon="umbrella" w="30" badge="3" bs="background:#f98c9c;right:3px;top:7px" style="margin-left:14px;width:36px"></task-app><task-app icon="windows" style="margin-left:209px"></task-app>
 <div class="q"><pt-icon name="smag" w="16"></pt-icon><fit-text w="41">Search</fit-text><pt-icon class="b" name="backpack" w="46"></pt-icon></div>
 <task-app icon="taskview"></task-app><task-app icon="explorer" w="26"></task-app><task-app icon="outlook"></task-app><task-app icon="chrome" w="30" run></task-app><task-app icon="teams" w="28" run ok></task-app><task-app icon="pt" run active></task-app><task-app icon="whatsapp" w="26" run badge="5" ></task-app><task-app icon="shark" run></task-app>
 <pt-icon name="up" w="14" style="margin-left:67px"></pt-icon><pt-icon name="sync" w="20" style="margin-left:15px"></pt-icon><div class="l" style="margin-left:16px;align-items:center;width:24px"><fit-text w="24">ENG</fit-text><fit-text w="12">IN</fit-text></div><pt-icon name="wifi" w="17" style="margin-left:17px"></pt-icon><pt-icon name="vol" w="18" style="margin-left:7px"></pt-icon><pt-icon name="batt" w="18" style="margin-left:6px"></pt-icon><div class="l" style="margin-left:15px;align-items:flex-end"><fit-text w="29">20:51</fit-text><fit-text w="62">10-03-2025</fit-text></div><pt-icon name="bell" w="18" style="margin-left:8px"></pt-icon><div class="cp" style="margin-left:14px"><pt-icon name="copilot" w="24"></pt-icon><span>PRE</span></div>`);
define('pt-desktop',':host{display:flex;flex-direction:column;width:1280px;height:720px;overflow:hidden;background:#fff}:host>*,title-bar,menu-bar,tool-bar,view-bar,net-canvas,time-bar,task-bar{flex-shrink:0}.b{display:flex;height:84px;flex:none}.b>*{flex-shrink:0}',
 `<title-bar></title-bar><menu-bar></menu-bar><tool-bar items="file folder save print info user wizard | copy paste undo redo | zin zr zout rect list | doc cards cloudwin" help></tool-bar><tool-bar style="border-top:1px solid #ddd" items="select mag del resize | note pen frect fell blob | mail mailo"></tool-bar><view-bar></view-bar><net-canvas></net-canvas><time-bar></time-bar><div class="b"><device-picker></device-picker><cable-list></cable-list><scenario-panel></scenario-panel><pdu-table></pdu-table></div><task-bar></task-bar>`);
</script>
</body>
</html>
